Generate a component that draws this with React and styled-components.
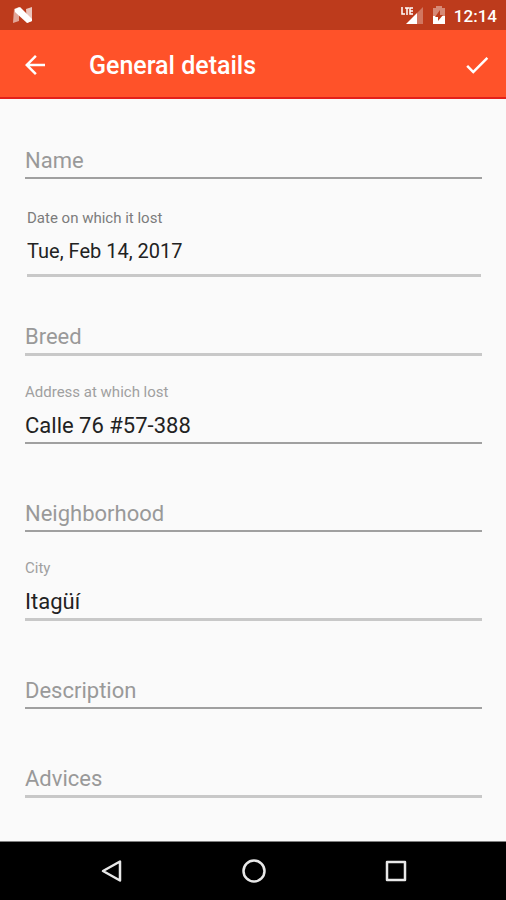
import React from "react";
import styled, { createGlobalStyle } from "styled-components";

const GlobalStyle = createGlobalStyle`
  * { box-sizing: border-box; }
  body {
    margin: 0;
    background: #fafafa;
    font-family: Roboto, "Liberation Sans", sans-serif;
  }
`;

const Screen = styled.div`
  display: flex;
  flex-direction: column;
  min-height: 100vh;
`;

const StatusBar = styled.div`
  display: flex;
  align-items: center;
  justify-content: space-between;
  height: 30px;
  padding: 0 9px 0 12px;
  background: #bd3b1c;
  color: #fff;
`;

const StatusIcons = styled.div`
  display: flex;
  align-items: center;
  gap: 8px;
`;

const Clock = styled.span`
  font-size: 17px;
  line-height: 30px;
  font-weight: 500;
  padding-top: 2px;
`;

const Toolbar = styled.header`
  display: flex;
  align-items: center;
  height: 69px;
  padding: 2px 14px 0 20px;
  border-bottom: 2px solid #e3201a;
  background: #ff5229;
  color: #fff;
`;

const Title = styled.h1`
  flex: 1;
  margin: 0 0 0 39px;
  padding-top: 2px;
  font-size: 25px;
  line-height: 32px;
  font-weight: 500;
`;

const IconButton = styled.button`
  display: flex;
  padding: 0;
  border: 0;
  background: none;
  color: inherit;
  cursor: pointer;
`;

const Form = styled.form`
  flex: 1;
  padding: 2px 24px 24px 25px;
`;

const Field = styled.div`
  box-sizing: content-box;
  display: flex;
  flex-direction: column;
  justify-content: flex-end;
  min-height: ${(p) => (p.$compact ? 76 : 86)}px;
  border-bottom: ${(p) => (p.$thick ? "3px solid #c8c8c8" : "2px solid #a0a0a0")};
`;

const DateField = styled(Field)`
  min-height: 89px;
  margin: 0 1px 0 2px;
  padding-bottom: 6px;
`;

const Label = styled.label`
  margin-bottom: 6px;
  color: ${(p) => (p.$dark ? "#7c7c7c" : "#a0a0a0")};
  font-size: 15px;
  line-height: 20px;
`;

const Input = styled.input`
  width: 100%;
  height: 34px;
  padding: 0;
  border: 0;
  outline: 0;
  background: none;
  color: #222;
  font-family: inherit;
  font-size: ${(p) => (p.$small ? 20 : 22)}px;

  &::placeholder {
    color: #999;
    opacity: 1;
  }
`;

const NavBar = styled.nav`
  display: flex;
  align-items: center;
  justify-content: space-between;
  height: 59px;
  padding: 0 95px 0 96px;
  border-top: 1px solid #808080;
  background: #000;
  color: #e8e8e8;
`;

const fields = [
  { id: "breed", name: "Breed", thick: true, compact: true },
  { id: "address", name: "Address at which lost", value: "Calle 76 #57-388" },
  { id: "neighborhood", name: "Neighborhood" },
  { id: "city", name: "City", value: "Itagüí", thick: true },
  { id: "description", name: "Description" },
  { id: "advices", name: "Advices", thick: true },
];

function TextField({ id, name, value, thick, compact }) {
  return (
    <Field $thick={thick} $compact={compact}>
      {value && <Label htmlFor={id}>{name}</Label>}
      <Input
        id={id}
        defaultValue={value}
        placeholder={value ? undefined : name}
        aria-label={value ? undefined : name}
      />
    </Field>
  );
}

function NougatIcon() {
  return (
    <svg width="22" height="18" viewBox="0 0 22 18" aria-hidden="true">
      <path d="M2 3 L7 1 V15 L1 17 Z" fill="#fff" opacity=".55" />
      <path d="M14 3 L20 1 V15 L15 17 Z" fill="#fff" opacity=".7" />
      <path d="M3 3 L8 1 L20 13 V15 L15 17 L3 6 Z" fill="#fff" />
    </svg>
  );
}

function SignalIcon() {
  return (
    <svg width="23" height="20" viewBox="0 0 23 20" aria-hidden="true">
      <path d="M22 2 V19 H16 V8 Z" fill="#fff" opacity=".3" />
      <path d="M16 8 V19 H5 Z" fill="#fff" />
      <path
        d="M1 2 V9 H4 M4 3 H8 M6 3 V10 M12 3 H9 V9 H12 M9 6 H12"
        fill="none"
        stroke="#fff"
        strokeWidth="1.5"
      />
    </svg>
  );
}

function BatteryIcon() {
  return (
    <svg width="14" height="20" viewBox="0 0 14 20" aria-hidden="true">
      <path d="M4 1 H10 V3 H13 V11 H1 V3 H4 Z" fill="#fff" opacity=".4" />
      <path d="M1 11 H13 V19 H1 Z" fill="#fff" />
      <path d="M8 5 L3 12 H6 V16 L11 10 H8 Z" fill="#bd3b1c" />
    </svg>
  );
}

function BackIcon() {
  return (
    <svg width="30" height="30" viewBox="0 0 24 24" aria-hidden="true">
      <path d="M20 11H7.83l5.59-5.59L12 4l-8 8 8 8 1.41-1.41L7.83 13H20v-2z" fill="currentColor" />
    </svg>
  );
}

function CheckIcon() {
  return (
    <svg width="30" height="30" viewBox="0 0 24 24" aria-hidden="true">
      <path d="M9 16.17 4.83 12l-1.42 1.41L9 19 21 7l-1.41-1.41z" fill="currentColor" />
    </svg>
  );
}

function NavIcon({ children }) {
  return (
    <svg
      width="30"
      height="30"
      viewBox="0 0 30 30"
      fill="none"
      stroke="currentColor"
      strokeWidth="2.5"
      strokeLinejoin="round"
      aria-hidden="true"
    >
      {children}
    </svg>
  );
}

export default function App() {
  return (
    <Screen>
      <GlobalStyle />
      <StatusBar>
        <NougatIcon />
        <StatusIcons>
          <SignalIcon />
          <BatteryIcon />
          <Clock>12:14</Clock>
        </StatusIcons>
      </StatusBar>
      <Toolbar>
        <IconButton aria-label="Back">
          <BackIcon />
        </IconButton>
        <Title>General details</Title>
        <IconButton type="submit" form="details" aria-label="Save">
          <CheckIcon />
        </IconButton>
      </Toolbar>
      <Form id="details" onSubmit={(e) => e.preventDefault()}>
        <Field $compact>
          <Input id="name" placeholder="Name" aria-label="Name" />
        </Field>
        <DateField $thick>
          <Label htmlFor="date" $dark>
            Date on which it lost
          </Label>
          <Input id="date" defaultValue="Tue, Feb 14, 2017" $small />
        </DateField>
        {fields.map((f) => (
          <TextField key={f.id} {...f} />
        ))}
      </Form>
      <NavBar>
        <IconButton aria-label="Navigate back">
          <NavIcon>
            <path d="M24 5.5 V24.5 L7 15 Z" />
          </NavIcon>
        </IconButton>
        <IconButton aria-label="Home">
          <NavIcon>
            <circle cx="15" cy="15" r="10.5" />
          </NavIcon>
        </IconButton>
        <IconButton aria-label="Overview">
          <NavIcon>
            <rect x="6" y="6" width="18" height="18" />
          </NavIcon>
        </IconButton>
      </NavBar>
    </Screen>
  );
}
